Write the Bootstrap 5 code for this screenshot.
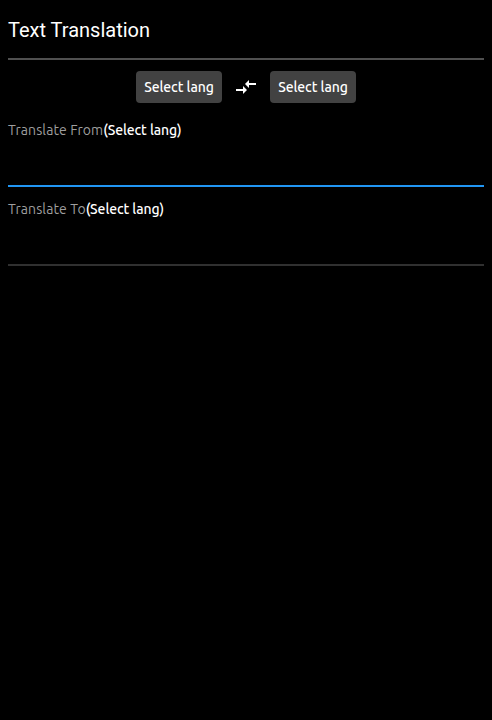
<!DOCTYPE html>
<html lang="en">
<head>
<meta charset="utf-8">
<meta name="viewport" content="width=device-width, initial-scale=1">
<title>Text Translation</title>
<link href="https://cdn.jsdelivr.net/npm/bootstrap@5.3.0/dist/css/bootstrap.min.css" rel="stylesheet">
<style>
body{background:#000;color:#fff;font-family:Ubuntu,"Noto Sans","Open Sans",sans-serif;font-size:14px;line-height:20px}
.page-title{font:400 20px/60px Roboto,sans-serif;height:60px;border-bottom:2px solid #505050;box-sizing:border-box}
.lang-row{height:54px}
.lang-btn{width:86px;height:32px;padding:0;border:0;border-radius:4px;background:#424242;color:#fff;font-size:14px;font-weight:500;line-height:32px;letter-spacing:-.08px}
.swap-btn{width:48px;height:32px;padding:0;border:0;color:#fff}
.from-field{padding-top:6px}
.to-field{padding-top:12px}
.field-label{height:20px;color:#9e9e9e;letter-spacing:.1px}
.field-label b{color:#fff;font-weight:500;letter-spacing:-.1px}
.text-field{display:block;width:100%;height:47px;resize:none;border:0;border-bottom:2px solid #303030;border-radius:0;background:#000;color:#fff;outline:0}
.text-field.active-line{border-color:#2196f3}
</style>
</head>
<body>
<main class="px-2">
<h1 class="page-title m-0">Text Translation</h1>
<div class="lang-row d-flex justify-content-center align-items-center">
<button class="btn lang-btn" type="button">Select lang</button>
<button class="btn swap-btn d-flex align-items-center justify-content-center" type="button" aria-label="Swap"><svg width="24" height="24" viewBox="0 0 24 24" fill="currentColor"><path d="M9.01 14H2v2h7.01v3L13 15l-3.99-4v3zm5.98-1v-3H22V8h-7.01V5L11 9l3.99 4z"/></svg></button>
<button class="btn lang-btn" type="button">Select lang</button>
</div>
<div class="from-field"><div class="field-label">Translate From<b>(Select lang)</b></div><textarea class="text-field active-line" aria-label="Source text"></textarea></div>
<div class="to-field"><div class="field-label">Translate To<b>(Select lang)</b></div><textarea class="text-field" aria-label="Translated text"></textarea></div>
</main>
<script src="https://cdn.jsdelivr.net/npm/bootstrap@5.3.0/dist/js/bootstrap.bundle.min.js"></script>
</body>
</html>
